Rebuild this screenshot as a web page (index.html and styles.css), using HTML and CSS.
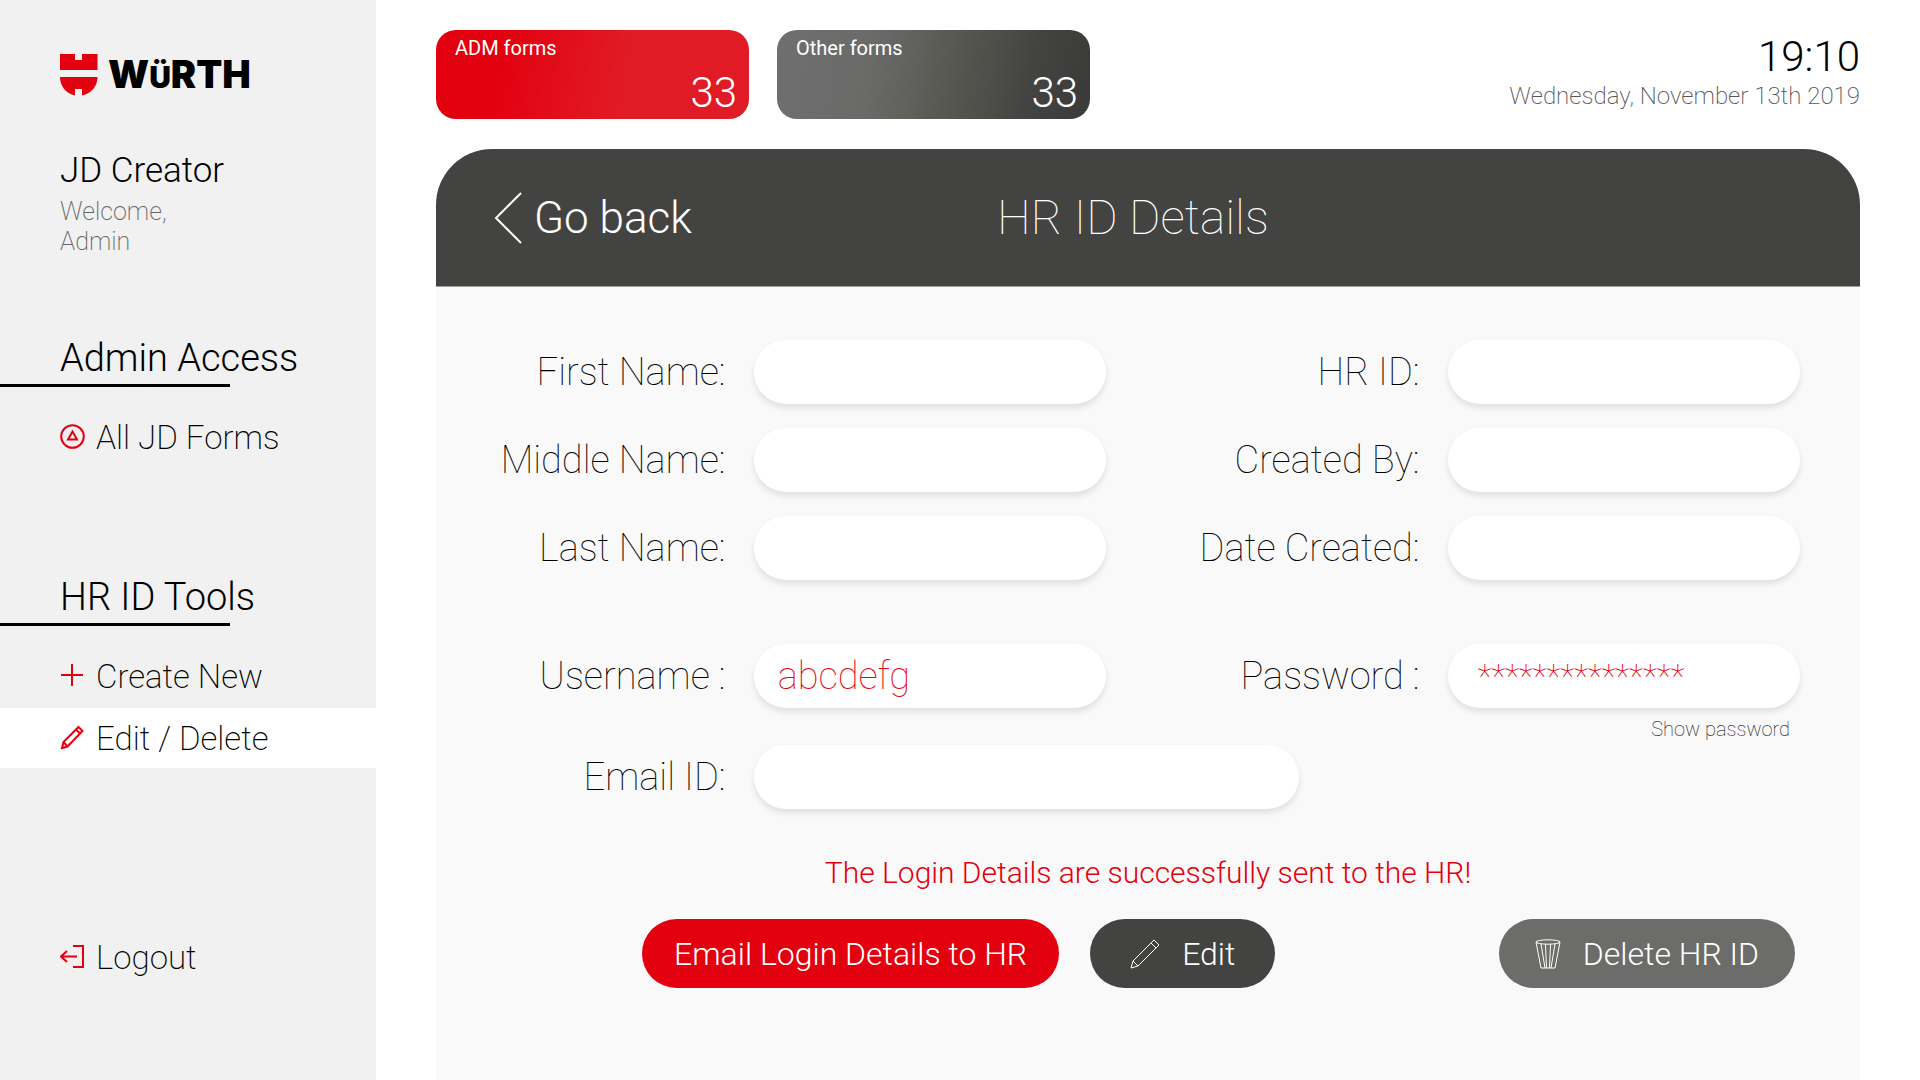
FILE: index.html
```html
<!DOCTYPE html>
<html lang="en">
<head>
  <meta charset="UTF-8">
  <meta name="viewport" content="width=device-width, initial-scale=1.0">
  <title>JD Creator - HR ID Details</title>
  <link rel="stylesheet" href="styles.css">
</head>
<body>
  <!-- Left sidebar -->
  <aside class="sidebar">
    <div class="logo">
      <svg width="38" height="42" viewBox="0 0 38 42" aria-hidden="true">
        <path fill="#e3000f" d="M0 0h15v6h7V0h15.500v16H0zM0 23h37.500c0 9-6 16.500-15.500 18.500V35h-7v6.500C6 39.500 0 32 0 23z"/>
      </svg>
      <span class="logo-text">W<span class="logo-umlaut">Ü</span>RTH</span>
    </div>

    <div class="user">
      <h1>JD Creator</h1>
      <p>Welcome,<br>Admin</p>
    </div>

    <nav>
      <section class="nav-group">
        <h2>Admin Access</h2>
        <a href="#" class="nav-link">
          <svg class="icon" viewBox="0 0 26 26">
            <circle cx="12.500" cy="12.500" r="11.300"/>
            <path d="M12.500 7.500l4.500 8H8z"/>
          </svg>
          All JD Forms
        </a>
      </section>

      <section class="nav-group">
        <h2>HR ID Tools</h2>
        <a href="#" class="nav-link">
          <svg class="icon" viewBox="0 0 26 26"><path d="M12 1v22M1 12h22"/></svg>
          Create New
        </a>
        <a href="#" class="nav-link active">
          <svg class="icon" viewBox="0 0 26 26">
            <path d="M2 23l1.500-6L18.500 2l4 4L7.500 21.500zM3.500 17l4 4.500M16 4.500l4 4"/>
          </svg>
          Edit / Delete
        </a>
      </section>
    </nav>

    <a href="#" class="nav-link logout">
      <svg class="icon" viewBox="0 0 26 26"><path d="M13 2h10v21H13M17 12.500H1M7 7l-6 5.500L7 18"/></svg>
      Logout
    </a>
  </aside>

  <!-- Main content -->
  <main class="content">
    <header class="topbar">
      <a href="#" class="card card-red">
        <span class="card-label">ADM forms</span>
        <span class="card-count">33</span>
      </a>
      <a href="#" class="card card-grey">
        <span class="card-label">Other forms</span>
        <span class="card-count">33</span>
      </a>
      <div class="clock">
        <div class="time">19:10</div>
        <div class="date">Wednesday, November 13th 2019</div>
      </div>
    </header>

    <div class="panel">
      <div class="panel-header">
        <a href="#" class="back">
          <svg width="28" height="52" viewBox="0 0 28 52"><path d="M27 1L2 26l25 25"/></svg>
          Go back
        </a>
        <h2>HR ID Details</h2>
      </div>

      <form class="details">
        <div class="fields">
          <label for="firstName">First Name:</label>
          <input type="text" id="firstName">
          <label for="hrId">HR ID:</label>
          <input type="text" id="hrId">

          <label for="middleName">Middle Name:</label>
          <input type="text" id="middleName">
          <label for="createdBy">Created By:</label>
          <input type="text" id="createdBy">

          <label for="lastName">Last Name:</label>
          <input type="text" id="lastName">
          <label for="dateCreated">Date Created:</label>
          <input type="text" id="dateCreated">
        </div>

        <div class="fields login-fields">
          <label for="username">Username :</label>
          <input type="text" id="username" value="abcdefg">
          <label for="password">Password :</label>
          <input type="text" id="password" class="masked" value="***************">
          <button type="button" class="show-password">Show password</button>

          <label for="email">Email ID:</label>
          <div class="email-field"><input type="text" id="email"></div>
        </div>

        <p class="message">The Login Details are successfully sent to the HR!</p>

        <div class="actions">
          <button type="button" class="btn btn-email">Email Login Details to HR</button>
          <button type="button" class="btn btn-edit">
            <svg width="30" height="30" viewBox="0 0 30 30"><path d="M1 29l2-7L24 1l5 5L8 27zM3 22l5 5M21 4l5 5"/></svg>
            Edit
          </button>
          <button type="button" class="btn btn-delete">
            <svg width="26" height="30" viewBox="0 0 26 30">
              <ellipse cx="13" cy="3" rx="12" ry="2.200"/>
              <path d="M1 3l5 26h14l5-26M6 5l4 24M10.500 5l1 24M15.500 5l-1 24M20 5l-4 24"/>
            </svg>
            Delete HR ID
          </button>
        </div>
      </form>
    </div>
  </main>
</body>
</html>
```
FILE: styles.css
```css
/* Global Styles */
* {
  box-sizing: border-box;
}

body {
  margin: 0;
  min-height: 100vh;
  display: flex;
  font-family: Roboto, "Liberation Sans", Arial, sans-serif;
  font-weight: 300;
  background-color: #fff;
  color: #000;
}

h1, h2, p {
  margin: 0;
  font-weight: 300;
}

a {
  color: inherit;
  text-decoration: none;
}

svg {
  flex: none;
}

input, button {
  font: inherit;
  border: none;
}

button {
  cursor: pointer;
}

/* Sidebar */
.sidebar {
  flex: none;
  width: 376px;
  padding-top: 54px;
  background-color: #f1f1f1;
}

.logo {
  display: flex;
  align-items: center;
  gap: 10px;
  height: 42px;
  padding-left: 60px;
}

.logo-text {
  font-family: Inter, sans-serif;
  font-size: 38px;
  font-weight: 900;
  line-height: 42px;
}

.logo-umlaut {
  font-size: 30px;
}

.user {
  padding: 54px 0 0 60px;
}

.user h1 {
  font-size: 35px;
  line-height: 42px;
}

.user p {
  margin-top: 5px;
  font-size: 25px;
  font-weight: 200;
  line-height: 30px;
  color: #666;
}

nav {
  margin-top: 76px;
}

.nav-group {
  height: 239px;
}

.nav-group h2 {
  position: relative;
  padding-left: 60px;
  height: 54px;
  font-size: 38px;
  line-height: 50px;
}

.nav-group h2::after {
  content: "";
  position: absolute;
  left: 0;
  bottom: 0;
  width: 230px;
  height: 3px;
  background-color: #000;
}

.nav-link {
  display: flex;
  align-items: center;
  gap: 10px;
  height: 60px;
  padding-left: 60px;
  font-size: 33px;
  font-weight: 200;
}

.nav-group h2 + .nav-link {
  margin-top: 20px;
}

.nav-link.active {
  margin-top: 2px;
  background-color: #fff;
}

.icon {
  width: 26px;
  height: 26px;
  fill: none;
  stroke: #e3000f;
  stroke-width: 2;
}

.logout {
  margin-top: 116px;
}

/* Main content */
.content {
  flex: 1;
  display: flex;
  flex-direction: column;
  padding: 30px 60px 0;
}

.topbar {
  display: flex;
  gap: 28px;
}

.card {
  display: flex;
  flex-direction: column;
  justify-content: space-between;
  width: 313px;
  height: 89px;
  padding: 4px 12px 4px 19px;
  border-radius: 20px;
  color: #fff;
}

.card-red {
  background: linear-gradient(100deg, #e3000f 20%, #e01b25 60%);
}

.card-grey {
  background: linear-gradient(100deg, #706f6f, #6a6a69 30%, #585852 55%, #434341 80%, #3a3a39);
}

.card-label {
  font-size: 20px;
  font-weight: 400;
  line-height: 28px;
}

.card-count {
  text-align: right;
  font-size: 42px;
  line-height: 44px;
}

.clock {
  margin-left: auto;
  text-align: right;
}

.time {
  font-size: 42px;
  line-height: 54px;
}

.date {
  font-size: 24px;
  font-weight: 200;
  line-height: 24px;
  color: #555;
}

/* Details panel */
.panel {
  flex: 1;
  margin-top: 30px;
  border-radius: 56px 56px 0 0;
  background-color: #f9f9f9;
  overflow: hidden;
}

.panel-header {
  display: grid;
  grid-template-columns: 1fr auto 1fr;
  align-items: center;
  height: 138px;
  padding: 0 88px 0 58px;
  background-color: #434341;
  border-bottom: 1px solid #9d9d9c;
  color: #fff;
}

.panel-header h2 {
  font-size: 48px;
  font-weight: 100;
}

.back {
  display: flex;
  align-items: center;
  gap: 12px;
  font-size: 44px;
}

.back svg {
  fill: none;
  stroke: #fff;
  stroke-width: 2;
}

.fields {
  display: grid;
  grid-template-columns: minmax(0, 5fr) minmax(0, 6fr) minmax(0, 5fr) minmax(0, 6fr);
  align-items: center;
  gap: 24px;
  padding: 53px 60px 0 0;
}

.fields label {
  padding-right: 4px;
  text-align: right;
  font-size: 38px;
  font-weight: 100;
  white-space: nowrap;
}

.fields input {
  width: 100%;
  height: 64px;
  padding: 0 24px;
  border-radius: 32px;
  background-color: #fff;
  box-shadow: 0 4px 6px rgba(0, 0, 0, 0.1);
  font-size: 38px;
  font-weight: 100;
  color: #e3000f;
}

.fields .masked {
  padding: 0 30px;
  font-size: 33px;
}

.login-fields {
  row-gap: 0;
  padding-top: 64px;
}

.show-password {
  grid-column: 4;
  justify-self: end;
  height: 37px;
  padding: 4px 10px 0;
  background: none;
  font-size: 20px;
  font-weight: 100;
}

.email-field {
  grid-column: 2 / span 2;
  max-width: 545px;
}

.message {
  margin-top: 40px;
  text-align: center;
  font-size: 30px;
  line-height: 48px;
  color: #e3000f;
}

/* Buttons under the form */
.actions {
  display: flex;
  gap: 31px;
  padding: 22px 65px 40px 206px;
}

.btn {
  display: flex;
  align-items: center;
  height: 69px;
  padding: 0 40px;
  border-radius: 35px;
  font-size: 32px;
  color: #fff;
}

.btn svg {
  margin-right: 22px;
  fill: none;
  stroke: #fff;
  stroke-width: 1;
}

.btn-email {
  padding: 0 32px;
  background-color: #e3000f;
}

.btn-edit {
  background-color: #434341;
}

.btn-delete {
  margin-left: auto;
  padding: 0 36px;
  background-color: #6c6c6a;
}
```
